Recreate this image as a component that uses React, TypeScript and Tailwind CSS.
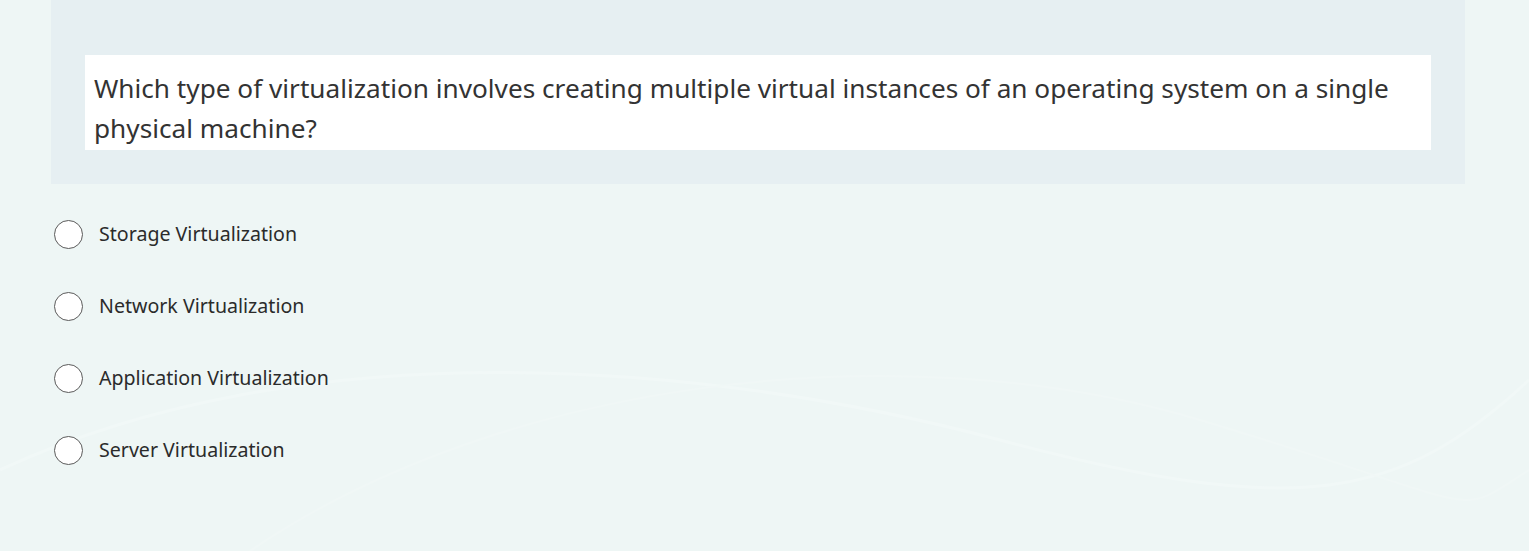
import React from 'react';

const options = [
  'Storage Virtualization',
  'Network Virtualization',
  'Application Virtualization',
  'Server Virtualization',
];

export default function App() {
  return (
    <div
      className="relative w-full h-[551px] overflow-hidden bg-[#eef6f5] text-[#333333]"
      style={{ fontFamily: '"Noto Sans", "Open Sans", sans-serif' }}
    >
      {/* faint background waves */}
      <svg className="absolute inset-0 w-full h-full" viewBox="0 0 1529 551" preserveAspectRatio="none">
        <path d="M0 470 C 300 330, 700 360, 1000 440 S 1400 500, 1529 380" fill="none" stroke="#f1f8f7" strokeWidth="3" />
        <path d="M250 551 C 500 380, 900 330, 1200 420 S 1450 520, 1529 470" fill="none" stroke="#f0f7f6" strokeWidth="2" />
      </svg>

      <div className="relative">
        <div className="ml-[51px] w-[1414px] bg-[#e6eff2] pt-[55px] pb-[34px] pl-[34px]">
          <div className="w-[1346px] bg-white pl-[9px] pt-[13px] pb-[2px] text-[26.2px] leading-[40px] text-[#333333]">
            Which type of virtualization involves creating multiple virtual instances of an operating system on a single physical machine?
          </div>
        </div>

        <div className="pt-[14px] pl-[54px] flex flex-col">
          {options.map((o) => (
            <label key={o} className="h-[72px] flex items-center gap-[16px] cursor-pointer">
              <span className="w-[29px] h-[29px] rounded-full border-[1.5px] border-[#5a5a5a] bg-white shrink-0" />
              <span className="text-[19.6px] text-[#2b2b2b]">{o}</span>
            </label>
          ))}
        </div>
      </div>
    </div>
  );
}
